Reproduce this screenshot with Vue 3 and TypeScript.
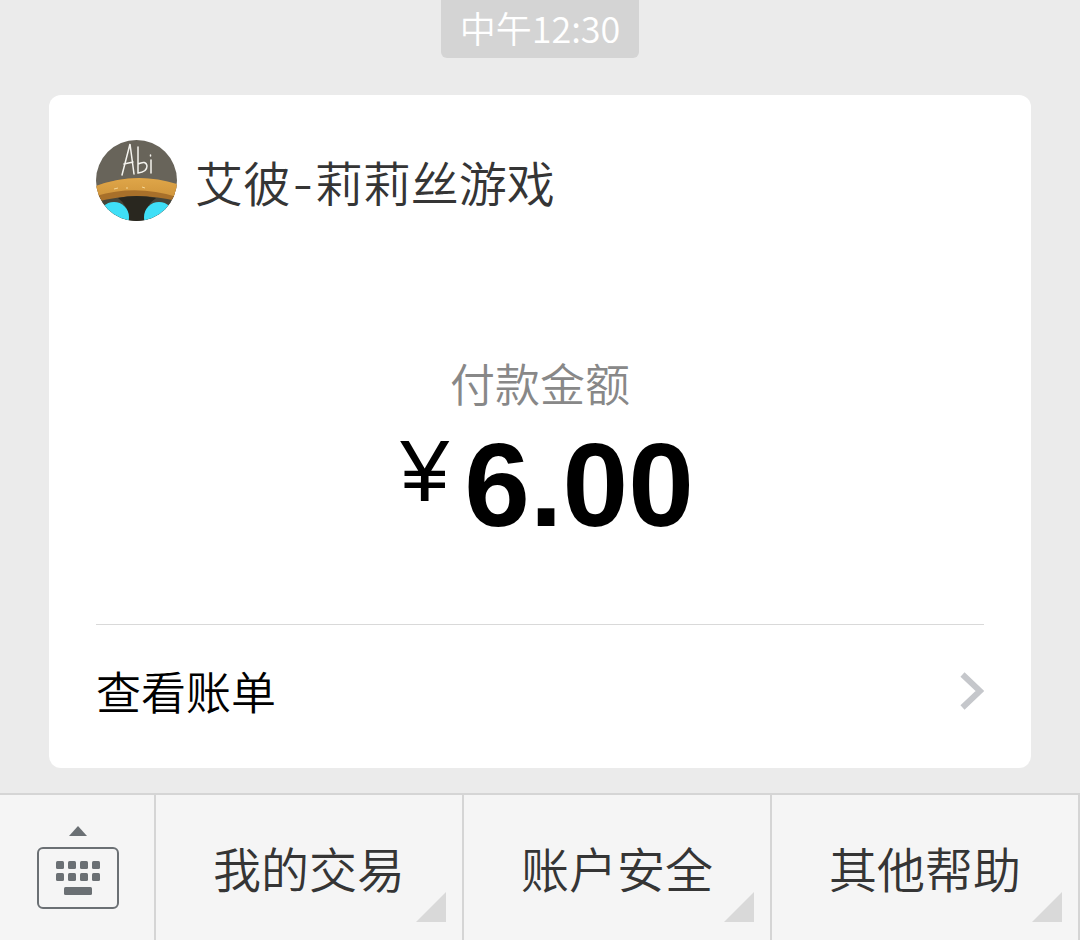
<script setup lang="ts">
interface MenuEntry {
  id: string
  label: string
}

const time = '中午12:30'
const menu: MenuEntry[] = [
  { id: 'transactions', label: '我的交易' },
  { id: 'security', label: '账户安全' },
  { id: 'help', label: '其他帮助' },
]
const keyColumns = [0, 12, 24, 36]
</script>

<template>
  <div class="page">
    <main class="chat">
      <time class="stamp">{{ time }}</time>

      <article class="card">
        <header class="merchant">
          <svg class="avatar" viewBox="0 0 81 81" aria-hidden="true">
            <defs>
              <clipPath id="avatar-clip"><circle cx="40.500" cy="40.500" r="40.500" /></clipPath>
              <linearGradient id="brim" x1="0" y1="0" x2="0" y2="1">
                <stop offset="0" stop-color="#dfa649" />
                <stop offset="1" stop-color="#d0953b" />
              </linearGradient>
            </defs>
            <g clip-path="url(#avatar-clip)">
              <rect width="81" height="81" fill="#68645a" />
              <path d="M0 56 H81 V81 H0Z" fill="#45453a" />
              <path d="M0 46 Q40 31 81 45 V61 Q40 51 0 62Z" fill="#a8702a" />
              <path d="M0 46 Q40 31 81 44 V57 Q40 44 0 56Z" fill="url(#brim)" />
              <path d="M18 49 l4 -1 M30 48 l2 0 M46 47 l3 1" stroke="#f5d797" stroke-width="1" />
              <path d="M22 58 Q40 54 60 58 Q48 66 48 81 H33 Q33 66 22 58Z" fill="#29271f" />
              <ellipse cx="18" cy="77" rx="15" ry="15" fill="#3fdff7" />
              <ellipse cx="63" cy="77" rx="15" ry="15" fill="#3fdff7" />
              <g fill="none" stroke="#f4f3ee" stroke-width="1.5" stroke-linecap="round">
                <path d="M26 35 L34 4 L38 34 M28 24 L37 22" />
                <path d="M42 7 V33 Q51 32 51 26 Q50 20 42 24" />
                <path d="M55 20 V33 M54.500 15 v1" />
              </g>
            </g>
          </svg>
          <h1 class="name">艾彼<span class="dash">-</span>莉莉丝游戏</h1>
        </header>

        <section class="payment">
          <p class="caption">付款金额</p>
          <p class="amount"><span class="currency">¥</span><span class="value">6.00</span></p>
        </section>

        <a class="bill" href="#bill">
          <span>查看账单</span>
          <svg class="chevron" viewBox="0 0 24 38" aria-hidden="true">
            <path d="M2.500 2.500 L20 19 L2.500 35.500" fill="none" stroke="#c5c7cb" stroke-width="6" />
          </svg>
        </a>
      </article>
    </main>

    <nav class="menu">
      <button class="keyboard" type="button" aria-label="键盘">
        <svg class="keyboard-icon" viewBox="0 0 82 84" aria-hidden="true">
          <path d="M32 11 L41 1 L50 11Z" fill="#6b7074" />
          <rect x="1" y="23" width="80" height="60" rx="5" fill="none" stroke="#6b7074" stroke-width="2" />
          <g fill="#6b7074">
            <template v-for="x in keyColumns" :key="x">
              <rect :x="19 + x" y="36" width="8" height="8" rx="1.500" />
              <rect :x="19 + x" y="48" width="8" height="8" rx="1.500" />
            </template>
            <rect x="27" y="62" width="28" height="8" rx="1.500" />
          </g>
        </svg>
      </button>
      <button v-for="entry in menu" :key="entry.id" class="entry" type="button">
        {{ entry.label }}
      </button>
    </nav>
  </div>
</template>

<style>
body {
  margin: 0;
  background: #ebebeb;
}
</style>

<style scoped>
.page {
  display: flex;
  flex-direction: column;
  min-height: 100vh;
  background: #ebebeb;
  font-family: "Noto Sans CJK SC", "Liberation Sans", sans-serif;
  font-weight: 350;
}

.chat {
  display: flex;
  flex: 1;
  flex-direction: column;
  align-items: center;
  padding: 0 49px 25px;
}

.stamp {
  padding: 0 19px 4px;
  border-radius: 0 0 6px 6px;
  background: #d4d4d4;
  color: #fff;
  font-size: 36px;
  line-height: 54px;
}

.card {
  box-sizing: border-box;
  width: 100%;
  margin-top: 37px;
  padding: 45px 47px 12px;
  border-radius: 12px;
  background: #fff;
}

.merchant {
  display: flex;
  align-items: center;
  gap: 18px;
}

.avatar {
  flex: none;
  width: 81px;
  height: 81px;
}

.name {
  margin: 0;
  color: #353535;
  font-size: 48px;
  font-weight: 350;
  line-height: 80px;
}

.dash {
  padding: 0 1px;
  font-family: Inter, sans-serif;
  line-height: 1;
}

.payment {
  padding: 130px 0 69px;
  text-align: center;
}

.caption {
  margin: 0;
  color: #888;
  font-size: 45px;
  line-height: 64px;
}

.amount {
  display: flex;
  justify-content: center;
  gap: 15px;
  margin: 0;
  padding-left: 14px;
  color: #000;
  font-family: "Liberation Sans", sans-serif;
  line-height: 140px;
}

.currency {
  font-size: 88px;
  line-height: 112px;
}

.value {
  font-size: 118px;
  font-weight: 700;
}

.bill {
  display: flex;
  align-items: center;
  justify-content: space-between;
  border-top: 1px solid #d9d9d9;
  color: #000;
  font-size: 45px;
  line-height: 131px;
  text-decoration: none;
}

.chevron {
  width: 24px;
  height: 38px;
}

.menu {
  display: grid;
  grid-template-columns: 156px repeat(3, 1fr);
  height: 145px;
  border-top: 2px solid #d5d5d5;
  background: #f5f5f5;
}

.keyboard,
.entry {
  position: relative;
  margin: 0;
  padding: 0 0 2px;
  border: 0;
  border-right: 2px solid #d5d5d5;
  background: none;
  color: #353535;
  font: inherit;
  font-size: 48px;
  cursor: pointer;
}

.keyboard {
  display: flex;
  align-items: center;
  justify-content: center;
  padding-left: 2px;
}

.keyboard-icon {
  width: 82px;
  height: 84px;
}

.entry::after {
  content: "";
  position: absolute;
  right: 16px;
  bottom: 18px;
  width: 30px;
  height: 30px;
  background: #d9d9d9;
  clip-path: polygon(100% 0, 100% 100%, 0 100%);
}
</style>
